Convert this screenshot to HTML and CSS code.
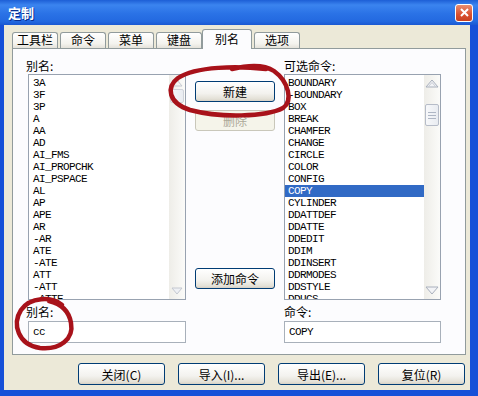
FILE: index.html
```html
<!DOCTYPE html>
<html lang="zh-CN">
<head>
  <meta charset="UTF-8">
  <title>定制</title>
  <link rel="stylesheet" href="styles.css">
</head>
<body>
  <div class="window">
    <div class="titlebar">
      <span class="title">定制</span>
      <span class="close">
        <svg width="9" height="9" viewBox="0 0 9 9"><path d="M1 1 L8 8 M8 1 L1 8" stroke="#fff" stroke-width="2"/></svg>
      </span>
    </div>

    <div class="frame">
      <div class="client">
        <div class="tabs">
          <div class="tab">工具栏</div>
          <div class="tab">命令</div>
          <div class="tab">菜单</div>
          <div class="tab">键盘</div>
          <div class="tab active">别名</div>
          <div class="tab">选项</div>
        </div>

        <div class="panel">
          <!-- 左边：别名列表 -->
          <div class="col left">
            <div class="label shift">别名:</div>
            <div class="listbox">
              <ul class="items pad-left">
                <li>3A</li><li>3F</li><li>3P</li><li>A</li><li>AA</li><li>AD</li>
                <li>AI_FMS</li><li>AI_PROPCHK</li><li>AI_PSPACE</li><li>AL</li><li>AP</li>
                <li>APE</li><li>AR</li><li>-AR</li><li>ATE</li><li>-ATE</li><li>ATT</li>
                <li>-ATT</li><li>-ATTE</li>
              </ul>
              <div class="sb">
                <div class="arrow">
                  <svg width="16" height="14" viewBox="0 0 16 14"><path d="M3 10 L8 4 L13 10 Z" fill="none" stroke="#c4c8d0"/></svg>
                </div>
                <div class="thumb small"></div>
                <div class="arrow down">
                  <svg width="16" height="14" viewBox="0 0 16 14"><path d="M3 4 L8 10 L13 4 Z" fill="#eef0f4" stroke="#c4c8d0"/></svg>
                </div>
              </div>
            </div>
            <div class="label low shift">别名:</div>
            <div class="field">cc</div>
          </div>

          <!-- 中间按钮 -->
          <div class="col mid">
            <button class="btn first">新建</button>
            <button class="btn disabled">删除</button>
            <button class="btn add">添加命令</button>
          </div>

          <!-- 右边：可选命令 -->
          <div class="col right">
            <div class="label">可选命令:</div>
            <div class="listbox">
              <ul class="items">
                <li>BOUNDARY</li><li>-BOUNDARY</li><li>BOX</li><li>BREAK</li><li>CHAMFER</li>
                <li>CHANGE</li><li>CIRCLE</li><li>COLOR</li><li>CONFIG</li>
                <li class="selected">COPY</li><li>CYLINDER</li><li>DDATTDEF</li><li>DDATTE</li>
                <li>DDEDIT</li><li>DDIM</li><li>DDINSERT</li><li>DDRMODES</li><li>DDSTYLE</li>
                <li>DDUCS</li>
              </ul>
              <div class="sb">
                <div class="arrow">
                  <svg width="16" height="14" viewBox="0 0 16 14"><path d="M2 11 L8 4 L14 11 Z" fill="#f2f3f6" stroke="#a9b0bc"/><path d="M4 11 L8 6.5 L12 11" fill="none" stroke="#c8ccd4"/></svg>
                </div>
                <div class="thumb">
                  <span></span><span></span><span></span>
                </div>
                <div class="arrow down">
                  <svg width="16" height="14" viewBox="0 0 16 14"><path d="M2 3 L8 10 L14 3 Z" fill="#f2f3f6" stroke="#a9b0bc"/></svg>
                </div>
              </div>
            </div>
            <div class="label low">命令:</div>
            <div class="field">COPY</div>
          </div>
        </div>

        <div class="footer">
          <button class="btn wide">关闭(C)</button>
          <button class="btn wide">导入(I)...</button>
          <button class="btn wide">导出(E)...</button>
          <button class="btn wide">复位(R)</button>
        </div>
      </div>
    </div>

    <!-- 红笔圈出来的地方 -->
    <svg class="marks" width="478" height="396" viewBox="0 0 478 396">
      <path d="M266 69 C238 66 196 66 178 78 C166 87 168 103 190 110 C220 118 266 117 283 108 C293 101 289 82 274 71 C262 63 244 66 232 69" />
      <path d="M62 305 C52 296 30 297 21 310 C12 324 18 345 40 348 C60 350 74 339 71 323 C69 311 62 304 49 301" />
    </svg>
  </div>
</body>
</html>
```

FILE: styles.css
```css
* {
  box-sizing: border-box;
}

body {
  margin: 0;
  width: 478px;
  height: 396px;
  overflow: hidden;
  font-family: "Noto Sans CJK SC", "Liberation Sans", sans-serif;
  font-size: 12px;
  color: #000;
}

.window {
  position: relative;
  height: 396px;
  display: flex;
  flex-direction: column;
  background: #1650d8;
}

.titlebar {
  height: 25px;
  display: flex;
  align-items: center;
  justify-content: space-between;
  padding: 0 5px 0 8px;
  background: linear-gradient(to bottom, #1d5fd6 0%, #3b84ef 20%, #2a72e6 55%, #2369e0 85%, #1a58d2 100%);
}

.title {
  color: #fff;
  font-weight: bold;
  font-size: 13px;
  text-shadow: 1px 1px 0 #0a2f90;
}

.close {
  width: 18px;
  height: 18px;
  display: flex;
  align-items: center;
  justify-content: center;
  border: 1px solid #fff;
  border-radius: 3px;
  background: linear-gradient(to bottom, #e98d70, #d9502f 60%, #c8401f);
}

.frame {
  flex: 1;
  padding: 0 8px 6px 4px;
  display: flex;
}

.client {
  flex: 1;
  background: #ece9d8;
  padding: 4px 4px 0 8px;
}

/* 标签页 */
.tabs {
  height: 19px;
  display: flex;
  align-items: flex-end;
}

.tab {
  width: 46px;
  height: 16px;
  margin-right: 2px;
  border: 1px solid #919b9c;
  border-bottom: none;
  border-radius: 3px 3px 0 0;
  background: linear-gradient(to bottom, #ffffff, #f4f3ee 70%, #e4e2da);
  text-align: center;
  line-height: 14px;
}

.tab.active {
  width: 50px;
  height: 20px;
  margin: 0 2px -1px -2px;
  background: #fcfcfe;
  position: relative;
  z-index: 1;
  line-height: 18px;
}

.panel {
  height: 307px;
  border: 1px solid #919b9c;
  background: #fcfcfe;
  padding: 8px 24px 11px 15px;
  display: flex;
}

.col {
  display: flex;
  flex-direction: column;
}

.left {
  width: 158px;
}

.mid {
  width: 98px;
}

.right {
  width: 157px;
}

.label {
  height: 17px;
  line-height: 17px;
}

.label.shift {
  margin-left: -2px;
}

.label.low {
  height: 21px;
  padding-top: 3px;
  line-height: 18px;
}

.listbox {
  height: 226px;
  border: 1px solid #98a2b0;
  background: #fff;
  display: flex;
}

.items {
  flex: 1;
  margin: 0;
  padding: 2px 0 0 0;
  list-style: none;
  overflow: hidden;
  font-family: "Liberation Mono", monospace;
  font-size: 11px;
  letter-spacing: -0.6px;
}

.items li {
  height: 12px;
  line-height: 12px;
  padding-left: 3px;
  white-space: nowrap;
}

.items.pad-left li {
  padding-left: 4px;
}

.items li.selected {
  background: #316ac5;
  color: #fff;
}

/* 滚动条 */
.sb {
  width: 16px;
  display: flex;
  flex-direction: column;
  background: linear-gradient(to right, #eeede8, #fbfbf9);
}

.arrow {
  height: 16px;
  display: flex;
  align-items: center;
  justify-content: center;
}

.arrow.down {
  margin-top: auto;
}

.thumb {
  margin: 13px 1px 0 1px;
  height: 22px;
  border: 1px solid #b6bcc8;
  border-radius: 2px;
  background: linear-gradient(to right, #f7f8fa, #e9ecf1);
  display: flex;
  flex-direction: column;
  justify-content: center;
  align-items: center;
  gap: 2px;
}

.thumb span {
  width: 8px;
  height: 1px;
  background: #aeb6c4;
}

.thumb.small {
  margin-top: -2px;
  height: 14px;
  border-color: #d0d3da;
}

.field {
  height: 22px;
  border: 1px solid #a8b0ba;
  background: #fff;
  padding-left: 4px;
  font-family: "Liberation Mono", monospace;
  font-size: 11px;
  letter-spacing: -0.6px;
  line-height: 20px;
}

/* 按钮 */
.btn {
  width: 80px;
  height: 21px;
  padding: 0;
  border: 1px solid #003c74;
  border-radius: 3px;
  background: linear-gradient(to bottom, #ffffff, #f3f2ee 60%, #e3e0d6 90%, #d6d0c5);
  font-family: "Noto Sans CJK SC", sans-serif;
  font-size: 12px;
  color: #000;
}

.mid .btn {
  margin-left: 9px;
}

.btn.first {
  margin-top: 24px;
}

.btn.disabled {
  margin-top: 8px;
  border-color: #c9c7ba;
  background: #f5f4ea;
  color: #aca899;
}

.btn.add {
  margin-top: 137px;
}

.footer {
  margin-top: 8px;
  padding-right: 1px;
  display: flex;
  justify-content: flex-end;
  gap: 13px;
}

.btn.wide {
  width: 87px;
  height: 22px;
}

/* 红圈 */
.marks {
  position: absolute;
  left: 0;
  top: 0;
  pointer-events: none;
}

.marks path {
  fill: none;
  stroke: #a8121a;
  stroke-width: 4.5;
  stroke-linecap: round;
}
```
